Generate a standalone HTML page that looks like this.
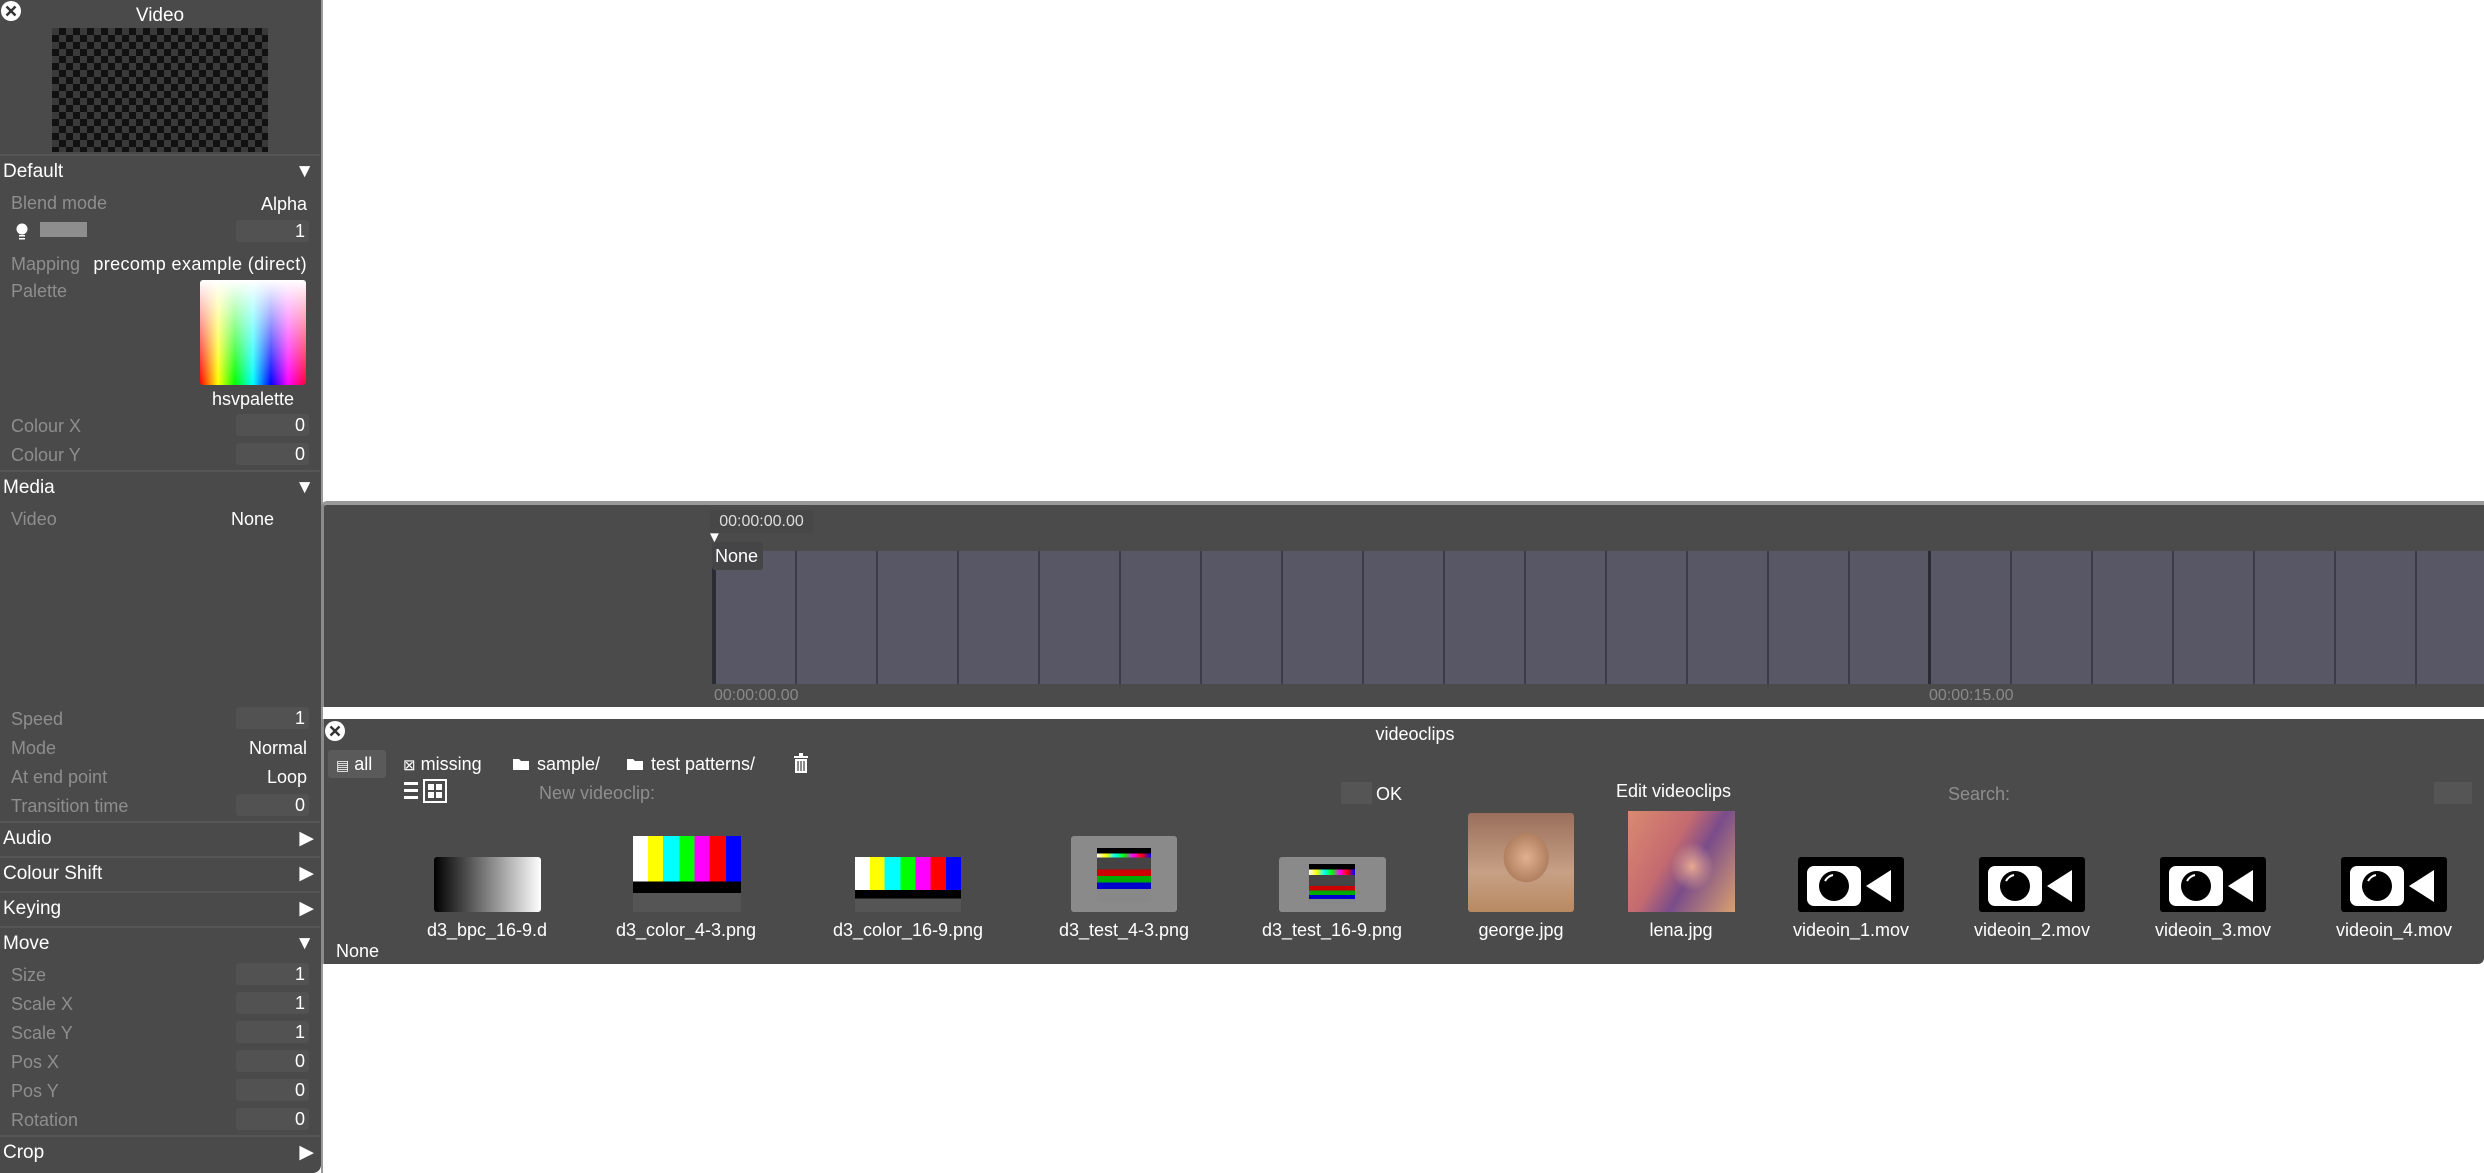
<!DOCTYPE html>
<html><head><meta charset="utf-8">
<style>
*{margin:0;padding:0;box-sizing:border-box}
body{width:2484px;height:1173px;background:#fff;position:relative;overflow:hidden;font-family:"Liberation Sans",sans-serif;color:#fff}
.a{position:absolute;white-space:nowrap}
.lp{position:absolute;left:0;top:0;width:321px;height:1173px;background:#4a4a4a;border-bottom-right-radius:8px}
.lab{position:absolute;left:11px;font-size:18px;color:#8e8e8e;line-height:22px;margin-top:1px}
.val{position:absolute;right:14px;font-size:18px;color:#fff;line-height:22px;margin-top:1px}
.box{position:absolute;left:236px;width:73px;height:22px;background:#525252;border-radius:3px;text-align:right;padding-right:4px;font-size:18px;line-height:22px}
.hdr{position:absolute;left:0;width:320px;height:34px;border-top:2px solid #565656;font-size:19px;line-height:32px;padding-left:3px}
.hdr .t{position:absolute;right:6px;top:0;font-size:19px}
.lbl{position:absolute;font-size:18px;line-height:22px;transform:translateX(-50%);top:919px}
.th{position:absolute}
</style></head><body>

<div class="lp">
  <svg class="a" style="left:0;top:0" width="22" height="22" viewBox="0 0 22 22"><circle cx="11" cy="11" r="10" fill="#fff"/><path d="M6.5 6.5L15.5 15.5M15.5 6.5L6.5 15.5" stroke="#333" stroke-width="2.4"/></svg>
  <div class="a" style="left:0;width:320px;text-align:center;top:4px;font-size:19px;line-height:24px">Video</div>
  <div class="a" style="left:52px;top:28px;width:216px;height:124px;background:repeating-conic-gradient(#111 0 25%,#3a3a3a 0 50%) 0 0/14px 14px"></div>
  <div class="hdr" style="top:154px">Default<span class="t">▼</span></div>
  <div class="lab" style="top:191px">Blend mode</div><div class="val" style="top:192px">Alpha</div>
  <svg class="a" style="left:15px;top:222px" width="16" height="20" viewBox="0 0 16 20"><circle cx="7" cy="7" r="5.5" fill="#fff"/><rect x="4" y="13" width="6" height="1.5" fill="#fff"/><rect x="4" y="16" width="6" height="1.5" fill="#fff"/></svg>
  <div class="a" style="left:40px;top:222px;width:47px;height:15px;background:#8e8e8e"></div>
  <div class="box" style="top:220px">1</div>
  <div class="lab" style="top:252px">Mapping</div><div class="val" style="top:252px;letter-spacing:0.4px">precomp example (direct)</div>
  <div class="lab" style="top:279px">Palette</div>
  <div class="a" style="left:200px;top:280px;width:106px;height:105px;border-radius:3px;background:linear-gradient(#fff,rgba(255,255,255,0) 100%),linear-gradient(90deg,#f00,#ff0 17%,#0f0 33%,#0ff 50%,#00f 67%,#f0f 83%,#f03)"></div>
  <div class="a" style="left:200px;width:106px;text-align:center;top:388px;font-size:18px;line-height:22px">hsvpalette</div>
  <div class="lab" style="top:414px">Colour X</div><div class="box" style="top:414px">0</div>
  <div class="lab" style="top:443px">Colour Y</div><div class="box" style="top:443px">0</div>
  <div class="hdr" style="top:470px">Media<span class="t">▼</span></div>
  <div class="lab" style="top:507px">Video</div><div class="val" style="top:507px;right:47px">None</div>
  <div class="lab" style="top:707px">Speed</div><div class="box" style="top:707px">1</div>
  <div class="lab" style="top:736px">Mode</div><div class="val" style="top:736px">Normal</div>
  <div class="lab" style="top:765px">At end point</div><div class="val" style="top:765px">Loop</div>
  <div class="lab" style="top:794px">Transition time</div><div class="box" style="top:794px">0</div>
  <div class="hdr" style="top:821px">Audio<span class="t">▶</span></div>
  <div class="hdr" style="top:856px">Colour Shift<span class="t">▶</span></div>
  <div class="hdr" style="top:891px">Keying<span class="t">▶</span></div>
  <div class="hdr" style="top:926px">Move<span class="t">▼</span></div>
  <div class="lab" style="top:963px">Size</div><div class="box" style="top:963px">1</div>
  <div class="lab" style="top:992px">Scale X</div><div class="box" style="top:992px">1</div>
  <div class="lab" style="top:1021px">Scale Y</div><div class="box" style="top:1021px">1</div>
  <div class="lab" style="top:1050px">Pos X</div><div class="box" style="top:1050px">0</div>
  <div class="lab" style="top:1079px">Pos Y</div><div class="box" style="top:1079px">0</div>
  <div class="lab" style="top:1108px">Rotation</div><div class="box" style="top:1108px">0</div>
  <div class="hdr" style="top:1135px">Crop<span class="t">▶</span></div>
</div>
<div class="a" style="left:321px;top:0;width:2px;height:1173px;background:#9a9a9a"></div>

<div class="a" style="left:321px;top:501px;width:2163px;height:206px;background:#4b4b4b;border-top:4px solid #9a9a9a;border-left:3px solid #8a8a8a;border-top-left-radius:6px"></div>
<div class="a" style="left:714px;top:551px;width:1770px;height:133px;background:repeating-linear-gradient(90deg,#3c3c48 0 2px,#575766 2px 81px)"></div>
<div class="a" style="left:712px;top:551px;width:4px;height:133px;background:#2b2b33"></div>
<div class="a" style="left:1928px;top:551px;width:3px;height:133px;background:#2b2b33"></div>
<div class="a" style="left:710px;top:510px;width:103px;height:23px;background:#474747;border-radius:3px;font-size:16px;line-height:23px;text-align:center;color:#ddd">00:00:00.00</div>
<div class="a" style="left:707px;top:530px;font-size:15px;line-height:15px">▼</div>
<div class="a" style="left:712px;top:542px;width:51px;height:28px;background:#454548;border-radius:3px;font-size:18px;line-height:28px;padding-left:3px">None</div>
<div class="a" style="left:714px;top:687px;font-size:16px;line-height:18px;color:#8a8a8a">00:00:00.00</div>
<div class="a" style="left:1929px;top:687px;font-size:16px;line-height:18px;color:#8a8a8a">00:00:15.00</div>

<div class="a" style="left:321px;top:719px;width:2163px;height:245px;background:#4b4b4b;border-left:3px solid #8a8a8a;border-bottom-right-radius:6px"></div>
<svg class="a" style="left:324px;top:720px" width="22" height="22" viewBox="0 0 22 22"><circle cx="11" cy="11" r="10" fill="#fff"/><path d="M6.5 6.5L15.5 15.5M15.5 6.5L6.5 15.5" stroke="#333" stroke-width="2.4"/></svg>
<div class="a" style="left:1300px;width:230px;text-align:center;top:723px;font-size:18px;line-height:22px">videoclips</div>
<div class="a" style="left:328px;top:750px;width:58px;height:28px;background:#5a5a5a;border-radius:3px"></div>
<div class="a" style="left:336px;top:752px;font-size:18px;line-height:24px"><span style="font-size:14px">▤</span> all</div>
<div class="a" style="left:403px;top:752px;font-size:18px;line-height:24px"><span style="font-size:15px">⊠</span> missing</div>
<svg class="a" style="left:513px;top:756px" width="16" height="14"><path d="M0 3h6l2 2h8v9H0z" fill="#fff"/></svg>
<div class="a" style="left:537px;top:752px;font-size:18px;line-height:24px">sample/</div>
<svg class="a" style="left:627px;top:756px" width="16" height="14"><path d="M0 3h6l2 2h8v9H0z" fill="#fff"/></svg>
<div class="a" style="left:651px;top:752px;font-size:18px;line-height:24px">test patterns/</div>
<svg class="a" style="left:793px;top:753px" width="16" height="20"><rect x="1" y="3" width="14" height="2" fill="#fff"/><rect x="6" y="0" width="4" height="3" fill="#fff"/><path d="M2 6h12v14H2z" fill="#fff"/><path d="M5 8v10M8 8v10M11 8v10" stroke="#4b4b4b" stroke-width="1.3"/></svg>
<svg class="a" style="left:404px;top:779px" width="46" height="24"><rect x="0" y="3" width="14" height="3" fill="#fff"/><rect x="0" y="10" width="14" height="3" fill="#fff"/><rect x="0" y="17" width="14" height="3" fill="#fff"/><rect x="20" y="1" width="22" height="22" fill="none" stroke="#fff" stroke-width="2"/><rect x="24" y="5" width="6" height="6" fill="#fff"/><rect x="32" y="5" width="6" height="6" fill="#fff"/><rect x="24" y="13" width="6" height="6" fill="#fff"/><rect x="32" y="13" width="6" height="6" fill="#fff"/></svg>
<div class="a" style="left:539px;top:782px;font-size:18px;line-height:22px;color:#8e8e8e">New videoclip:</div>
<div class="a" style="left:1341px;top:782px;width:31px;height:22px;background:#555"></div>
<div class="a" style="left:1376px;top:783px;font-size:18px;line-height:22px">OK</div>
<div class="a" style="left:1616px;top:780px;font-size:18px;line-height:22px">Edit videoclips</div>
<div class="a" style="left:1948px;top:783px;font-size:18px;line-height:22px;color:#8e8e8e">Search:</div>
<div class="a" style="left:2434px;top:782px;width:38px;height:22px;background:#555"></div>

<div class="th" style="left:434px;top:857px;width:107px;height:55px;border-radius:3px;background:linear-gradient(90deg,#000,#fff)"></div>
<div class="th" style="left:633px;top:836px;width:108px;height:76px;background:linear-gradient(#0000 0 60%,#000 60% 75%,#555 75% 100%),linear-gradient(90deg,#fff 0 14%,#ff0 14% 28%,#0ff 28% 43%,#0f0 43% 57%,#f0f 57% 71%,#f00 71% 86%,#00f 86%)"></div>
<div class="th" style="left:855px;top:857px;width:106px;height:55px;background:linear-gradient(#0000 0 60%,#000 60% 75%,#555 75% 100%),linear-gradient(90deg,#fff 0 14%,#ff0 14% 28%,#0ff 28% 43%,#0f0 43% 57%,#f0f 57% 71%,#f00 71% 86%,#00f 86%)"></div>
<div class="th" style="left:1071px;top:836px;width:106px;height:76px;background:#8a8a8a;border-radius:3px"><div class="a" style="left:26px;top:12px;width:54px;height:54px;background:linear-gradient(#000 0 10%,#0000 10% 18%,#444 18% 40%,#c00 40% 52%,#0a0 52% 64%,#00c 64% 76%,#888 76%),linear-gradient(90deg,#fff,#ff0,#0ff,#0f0,#f0f,#f00,#00f)"></div></div>
<div class="th" style="left:1279px;top:857px;width:107px;height:55px;background:#8a8a8a;border-radius:3px"><div class="a" style="left:30px;top:7px;width:46px;height:40px;background:linear-gradient(#000 0 14%,#0000 14% 28%,#444 28% 55%,#c00 55% 66%,#0a0 66% 77%,#00c 77% 88%,#888 88%),linear-gradient(90deg,#fff,#ff0,#0ff,#0f0,#f0f,#f00,#00f)"></div></div>
<div class="th" style="left:1468px;top:813px;width:106px;height:99px;border-radius:3px;background:radial-gradient(ellipse 30% 35% at 55% 45%,#e0b090,#b08060 70%,transparent 72%),linear-gradient(#9a6f5c,#c7a085 60%,#b88a62)"></div>
<div class="th" style="left:1628px;top:811px;width:107px;height:101px;background:radial-gradient(ellipse 25% 30% at 60% 55%,#e8a890,transparent 80%),linear-gradient(120deg,#d98a70,#c46a70 40%,#7a4c8a 60%,#d9a070)"></div>

<svg class="th" style="left:1798px;top:857px" width="106" height="55" viewBox="0 0 106 55"><rect width="106" height="55" rx="3" fill="#000"/><rect x="9" y="9" width="54" height="40" rx="7" fill="#fff"/><circle cx="36" cy="29" r="15" fill="#000"/><path d="M27 24q3-5 8-6" stroke="#fff" stroke-width="2" fill="none"/><path d="M68 29L93 13V45Z" fill="#fff"/></svg>
<svg class="th" style="left:1979px;top:857px" width="106" height="55" viewBox="0 0 106 55"><rect width="106" height="55" rx="3" fill="#000"/><rect x="9" y="9" width="54" height="40" rx="7" fill="#fff"/><circle cx="36" cy="29" r="15" fill="#000"/><path d="M27 24q3-5 8-6" stroke="#fff" stroke-width="2" fill="none"/><path d="M68 29L93 13V45Z" fill="#fff"/></svg>
<svg class="th" style="left:2160px;top:857px" width="106" height="55" viewBox="0 0 106 55"><rect width="106" height="55" rx="3" fill="#000"/><rect x="9" y="9" width="54" height="40" rx="7" fill="#fff"/><circle cx="36" cy="29" r="15" fill="#000"/><path d="M27 24q3-5 8-6" stroke="#fff" stroke-width="2" fill="none"/><path d="M68 29L93 13V45Z" fill="#fff"/></svg>
<svg class="th" style="left:2341px;top:857px" width="106" height="55" viewBox="0 0 106 55"><rect width="106" height="55" rx="3" fill="#000"/><rect x="9" y="9" width="54" height="40" rx="7" fill="#fff"/><circle cx="36" cy="29" r="15" fill="#000"/><path d="M27 24q3-5 8-6" stroke="#fff" stroke-width="2" fill="none"/><path d="M68 29L93 13V45Z" fill="#fff"/></svg>

<div class="lbl" style="left:487px">d3_bpc_16-9.d</div>
<div class="lbl" style="left:686px">d3_color_4-3.png</div>
<div class="lbl" style="left:908px">d3_color_16-9.png</div>
<div class="lbl" style="left:1124px">d3_test_4-3.png</div>
<div class="lbl" style="left:1332px">d3_test_16-9.png</div>
<div class="lbl" style="left:1521px">george.jpg</div>
<div class="lbl" style="left:1681px">lena.jpg</div>
<div class="lbl" style="left:1851px">videoin_1.mov</div>
<div class="lbl" style="left:2032px">videoin_2.mov</div>
<div class="lbl" style="left:2213px">videoin_3.mov</div>
<div class="lbl" style="left:2394px">videoin_4.mov</div>
<div class="a" style="left:336px;top:940px;font-size:18px;line-height:22px">None</div>
</body></html>
